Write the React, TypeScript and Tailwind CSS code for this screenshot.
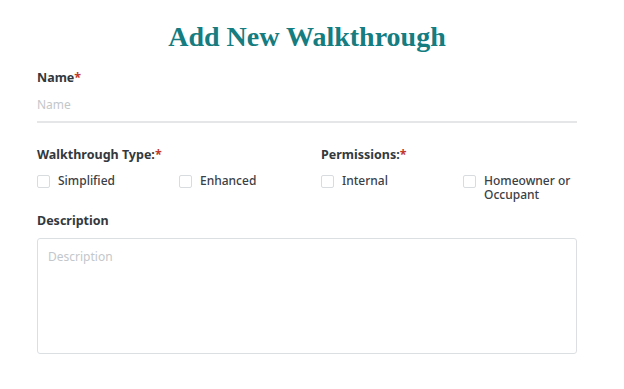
import React from "react";

function Check({ label, className = "" }: { label: React.ReactNode; className?: string }) {
  return (
    <label className={`flex items-start gap-2 ${className}`}>
      <span className="mt-[1px] h-[13px] w-[13px] shrink-0 rounded-[2px] border border-[#d9dcdf] bg-white" />
      <span className="text-[12px] font-medium leading-[14px] text-[#3b4046]">{label}</span>
    </label>
  );
}

export default function App() {
  return (
    <div className="min-h-screen bg-white font-['Source_Sans_Pro','Noto_Sans',sans-serif]">
      <div className="ml-[37px] w-[540px] pt-[20px]">
        {/* Heading */}
        <h1 className="text-center font-['Liberation_Serif',serif] text-[28px] font-bold leading-[34px] text-[#157c80]">
          Add New Walkthrough
        </h1>

        {/* Name */}
        <div className="mt-[15px]">
          <div className="text-[12.5px] font-bold leading-[18px] text-[#33383d]">
            Name<span className="text-[#c0392b]">*</span>
          </div>
          <input
            placeholder="Name"
            className="mt-[9px] w-full border-b-2 border-[#e4e6e8] pb-[7px] text-[12px] leading-[18px] text-[#33383d] outline-none placeholder:text-[#c3c7cb]"
          />
        </div>

        {/* Type + Permissions */}
        <div className="mt-[23px] flex">
          <div className="w-[284px]">
            <div className="text-[12.5px] font-bold leading-[18px] text-[#33383d]">
              Walkthrough Type:<span className="text-[#c0392b]">*</span>
            </div>
            <div className="mt-[10px] flex">
              <Check label="Simplified" className="w-[142px]" />
              <Check label="Enhanced" className="w-[142px]" />
            </div>
          </div>
          <div className="flex-1">
            <div className="text-[12.5px] font-bold leading-[18px] text-[#33383d]">
              Permissions:<span className="text-[#c0392b]">*</span>
            </div>
            <div className="mt-[10px] flex">
              <Check label="Internal" className="w-[142px]" />
              <Check label={<>Homeowner or<br />Occupant</>} className="flex-1" />
            </div>
          </div>
        </div>

        {/* Description */}
        <div className="mt-[10px]">
          <div className="text-[12.5px] font-bold leading-[18px] text-[#33383d]">Description</div>
          <textarea
            placeholder="Description"
            className="mt-[8px] block h-[116px] w-full resize-none rounded-[3px] border border-[#dcdfe2] px-[10px] py-[9px] text-[12px] leading-[18px] outline-none placeholder:text-[#c3c7cb]"
          />
        </div>
      </div>
    </div>
  );
}
